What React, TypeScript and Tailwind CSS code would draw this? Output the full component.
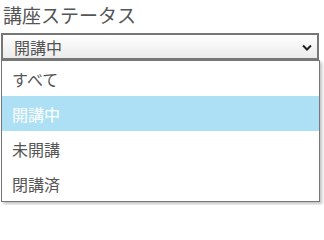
import React from 'react';

const options = ['すべて', '開講中', '未開講', '閉講済'];

export default function App() {
  const selected = '開講中';

  return (
    <div className="w-[324px] h-[205px] bg-white font-['Noto_Sans_CJK_JP','Noto_Sans',sans-serif] text-[#555]">
      {/* タイトル */}
      <div className="h-[33px] pl-[3px] pt-[1px] text-[19px] leading-[28px]">講座ステータス</div>

      {/* セレクトボックス */}
      <div className="ml-[1px] w-[318px] h-[27px] border-2 border-[#777] bg-gradient-to-b from-white to-[#ebebeb] flex items-center justify-between pl-[11px] pr-[5px]">
        <span className="text-[16px] leading-none text-[#555]">{selected}</span>
        <svg width="10" height="7" viewBox="0 0 10 7" className="mt-[1px]">
          <path d="M1 1.5 L5 5.5 L9 1.5" fill="none" stroke="#222" strokeWidth="2" />
        </svg>
      </div>

      {/* ドロップダウンリスト */}
      <div className="ml-[1px] w-[319px] border border-[#777] bg-white shadow-[2px_2px_3px_rgba(0,0,0,0.25)]">
        {options.map((opt) => (
          <div
            key={opt}
            className={`h-[35px] flex items-center pl-[10px] text-[16px] ${
              opt === selected ? 'bg-[#ade0f5] text-white' : 'text-[#555]'
            }`}
          >
            {opt}
          </div>
        ))}
      </div>
    </div>
  );
}
